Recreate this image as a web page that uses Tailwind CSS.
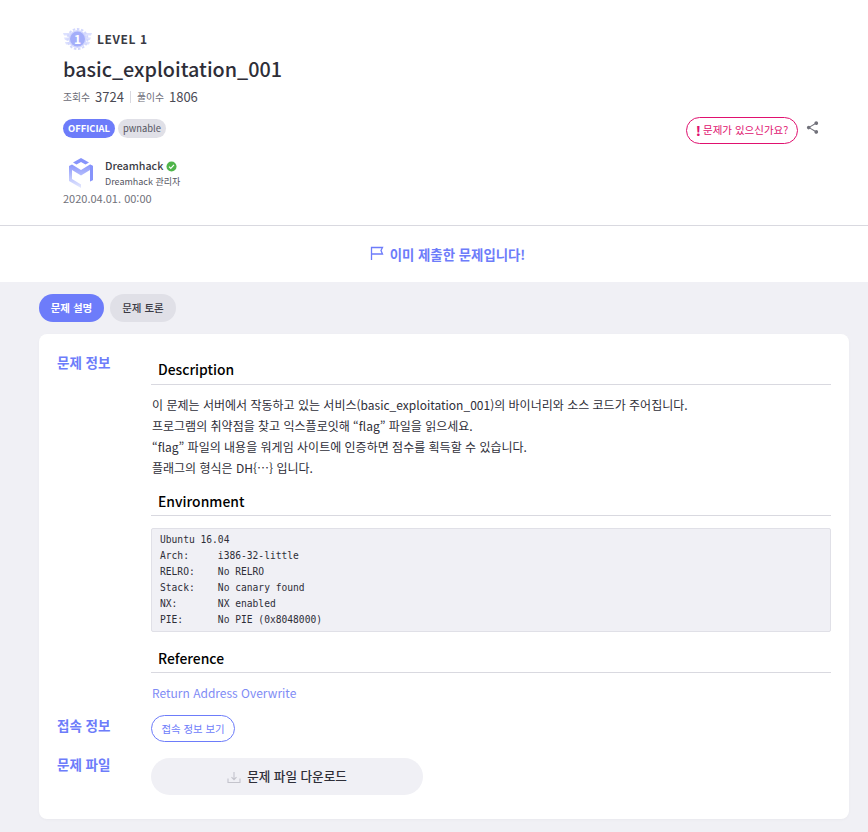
<!DOCTYPE html>
<html lang="ko">
<head>
  <meta charset="UTF-8" />
  <title>basic_exploitation_001</title>
  <script src="https://cdn.jsdelivr.net/npm/@tailwindcss/browser@4"></script>
</head>
<body class="bg-[#f0f0f5] h-[832px] overflow-hidden font-['Noto_Sans_CJK_KR','Noto_Sans',sans-serif] text-[#2e2e38]">
  <!-- Header -->
  <header class="bg-white h-[226px] border-b border-[#d9d9e0] pl-[63px] pr-[48px] pt-[27px]">
    <div class="flex items-center h-[24px]">
      <svg width="29" height="24" viewBox="0 0 29 24" class="mr-[5px]">
        <path d="M0 6h8v2.500H1zM1 10.500h7V13H2zM2 15h6v2.500H3zM29 6h-8v2.500h7zM28 10.500h-7V13h6zM27 15h-6v2.500h5z" fill="#dde1fe"/>
        <circle cx="14.500" cy="12" r="9" fill="#d2d7fd"/>
        <circle cx="14.500" cy="12" r="10" fill="none" stroke="#d2d7fd" stroke-width="2" stroke-dasharray="2.500 1.700"/>
        <circle cx="14.500" cy="12" r="7.500" fill="#a4aefa"/>
        <text x="14.500" y="16.500" text-anchor="middle" font-size="12" font-weight="700" fill="#fff">1</text>
      </svg>
      <span class="text-[12px] font-bold tracking-[0.6px] text-[#3a3a44]">LEVEL 1</span>
    </div>
    <h1 class="text-[19.800px] leading-[30px] font-medium mt-[3px] text-[#2e2e38]">basic_exploitation_001</h1>
    <div class="flex items-center mt-[5px] h-[16px]">
      <span class="text-[9.800px] text-[#6b6b76]">조회수</span>
      <span class="text-[13px] text-[#4a4a54] ml-[5px]">3724</span>
      <span class="w-px h-[12px] bg-[#d9d9e0] mx-[6px]"></span>
      <span class="text-[9.800px] text-[#6b6b76]">풀이수</span>
      <span class="text-[13px] text-[#4a4a54] ml-[5px]">1806</span>
    </div>
    <div class="flex items-center justify-between mt-[13px] h-[20px]">
      <div class="flex items-center gap-[3px]">
        <span class="h-[19px] leading-[19px] w-[52px] text-center rounded-full bg-[#6d7cfa] text-white text-[9.400px] font-bold">OFFICIAL</span>
        <span class="h-[19px] leading-[19px] w-[48px] text-center rounded-full bg-[#e0e0e7] text-[#55555f] text-[9.400px]">pwnable</span>
      </div>
      <div class="flex items-center relative top-[2px]">
        <button class="h-[27px] w-[112px] rounded-full border border-[#e0116f] text-[#e0116f] text-[10.500px] flex items-center justify-center">
          <span class="text-[13px] font-black mr-[2px] leading-none">!</span>문제가 있으신가요?
        </button>
        <svg width="15" height="15" viewBox="0 0 24 24" fill="#71717a" class="ml-[7px] relative -top-[3px]">
          <path d="M18 16.080c-.760 0-1.440.300-1.960.770L8.910 12.700c.050-.230.090-.460.090-.700s-.040-.470-.090-.700l7.050-4.110c.540.500 1.250.810 2.040.810 1.660 0 3-1.340 3-3s-1.340-3-3-3-3 1.340-3 3c0 .240.040.470.090.700L8.040 9.810C7.500 9.310 6.790 9 6 9c-1.660 0-3 1.340-3 3s1.340 3 3 3c.790 0 1.500-.310 2.040-.810l7.120 4.160c-.050.210-.080.430-.080.650 0 1.610 1.310 2.920 2.920 2.920s2.920-1.310 2.920-2.920-1.310-2.920-2.920-2.920z"/>
        </svg>
      </div>
    </div>
    <div class="flex items-center mt-[20px] h-[30px]">
      <svg width="26" height="30" viewBox="0 0 26 30" class="ml-[5px] mr-[11px]">
        <defs>
          <linearGradient id="logoGrad" x1="0" y1="0" x2="0" y2="1">
            <stop offset="0" stop-color="#8b97fb"/>
            <stop offset="1" stop-color="#e4e8fe"/>
          </linearGradient>
        </defs>
        <path d="M13 0l8 4.500-3.500 2L13 4 8.500 6.500 5 4.500z" fill="#8794fb"/>
        <path d="M1 8l3-1.500 9 5.500 9-5.500L25 8v14l-3 1.500V12L13 17.500 4 12v9l9 5.500V30L1 23z" fill="url(#logoGrad)"/>
        <path d="M22 6.500L25 8v14l-3 1.500z" fill="#8794fb"/>
      </svg>
      <div>
        <div class="flex items-center h-[16px]">
          <span class="text-[10.700px] font-medium text-[#3a3a44]">Dreamhack</span>
          <svg width="11" height="11" viewBox="0 0 12 12" class="ml-[3px]">
            <circle cx="6" cy="6" r="5.500" fill="#4fb54a"/>
            <path d="M3.300 6.100l1.900 1.900 3.500-3.700" stroke="#fff" stroke-width="1.300" fill="none"/>
          </svg>
        </div>
        <div class="text-[9px] leading-[13px] text-[#55555f]">Dreamhack 관리자</div>
      </div>
    </div>
    <div class="text-[11px] leading-[14px] text-[#71717a] mt-[3px]">2020.04.01. 00:00</div>
  </header>

  <!-- Submitted banner -->
  <div class="bg-white h-[56px] flex items-center justify-center pl-[27px] text-[#6d7cfa] text-[13.400px] font-bold">
    <svg width="14" height="14" viewBox="0 0 14 14" fill="none" stroke="#6d7cfa" stroke-width="1.300" class="mr-[6px] relative -top-[1px]">
      <path d="M1.500 14V1.500h11l-1.500 3 1.500 3.500H1.500"/>
    </svg>
    이미 제출한 문제입니다!
  </div>

  <main class="px-[39px] pr-[19px]">
    <!-- Tabs -->
    <div class="flex gap-[6px] pt-[12px]">
      <button class="h-[28px] w-[65px] rounded-full bg-[#6d7cfa] text-white text-[10.500px] font-bold">문제 설명</button>
      <button class="h-[28px] w-[66px] rounded-full bg-[#e0e0e7] text-[#3a3a44] text-[10.500px] font-medium">문제 토론</button>
    </div>

    <!-- Card -->
    <section class="bg-white rounded-[8px] mt-[12px] h-[485px] pl-[18px] pr-[18px] pt-[18px] shadow-[0_1px_3px_rgba(0,0,0,0.03)]">
      <div class="flex">
        <div class="w-[94px] shrink-0 text-[13.500px] font-bold text-[#6d7cfa] leading-[20px]">문제 정보</div>
        <div class="flex-1 min-w-0 pt-[7px]">
          <h2 class="text-[13.900px] leading-[20px] font-medium text-black pl-[7px] pb-[5px] border-b border-[#d9d9e0]">Description</h2>
          <div class="text-[12px] leading-[21px] text-[#2e2e38] mt-[9px] pl-[1px]">
            <p>이 문제는 서버에서 작동하고 있는 서비스(basic_exploitation_001)의 바이너리와 소스 코드가 주어집니다.</p>
            <p>프로그램의 취약점을 찾고 익스플로잇해 “flag” 파일을 읽으세요.</p>
            <p>“flag” 파일의 내용을 워게임 사이트에 인증하면 점수를 획득할 수 있습니다.</p>
            <p>플래그의 형식은 DH{…} 입니다.</p>
          </div>
          <h2 class="text-[13.900px] leading-[20px] font-medium text-black pl-[7px] pb-[4px] border-b border-[#d9d9e0] mt-[13px]">Environment</h2>
          <pre class="mt-[12px] bg-[#f0f0f5] border border-[#e0e0e7] rounded-[2px] px-[8px] py-[3px] font-['DejaVu_Sans_Mono',monospace] text-[9.620px] leading-[16px] text-[#2e2e38]">Ubuntu 16.04
Arch:     i386-32-little
RELRO:    No RELRO
Stack:    No canary found
NX:       NX enabled
PIE:      No PIE (0x8048000)</pre>
          <h2 class="text-[13.900px] leading-[20px] font-medium text-black pl-[7px] pb-[4px] border-b border-[#d9d9e0] mt-[16px]">Reference</h2>
          <a class="block text-[12px] leading-[18px] text-[#7f8cf5] mt-[11px] pl-[1px]">Return Address Overwrite</a>
        </div>
      </div>
      <div class="flex mt-[13px]">
        <div class="w-[94px] shrink-0 text-[13.500px] font-bold text-[#6d7cfa] leading-[20px]">접속 정보</div>
        <button class="h-[27px] w-[84px] rounded-full border border-[#6d7cfa] text-[#6d7cfa] text-[10.400px]">접속 정보 보기</button>
      </div>
      <div class="flex mt-[12px]">
        <div class="w-[94px] shrink-0 text-[13.500px] font-bold text-[#6d7cfa] leading-[20px]">문제 파일</div>
        <button class="h-[37px] w-[272px] mt-[4px] rounded-full bg-[#f0f0f5] text-[#2e2e38] text-[12.600px] font-medium flex items-center justify-center">
          <svg width="14" height="14" viewBox="0 0 14 14" fill="none" stroke="#c4c4cc" stroke-width="1.100" class="mr-[6px]">
            <path d="M1 8.500V12.500h12V8.500M7 2v7.500M4.500 7.200L7 9.700l2.500-2.500"/>
          </svg>
          문제 파일 다운로드
        </button>
      </div>
    </section>
  </main>
</body>
</html>
